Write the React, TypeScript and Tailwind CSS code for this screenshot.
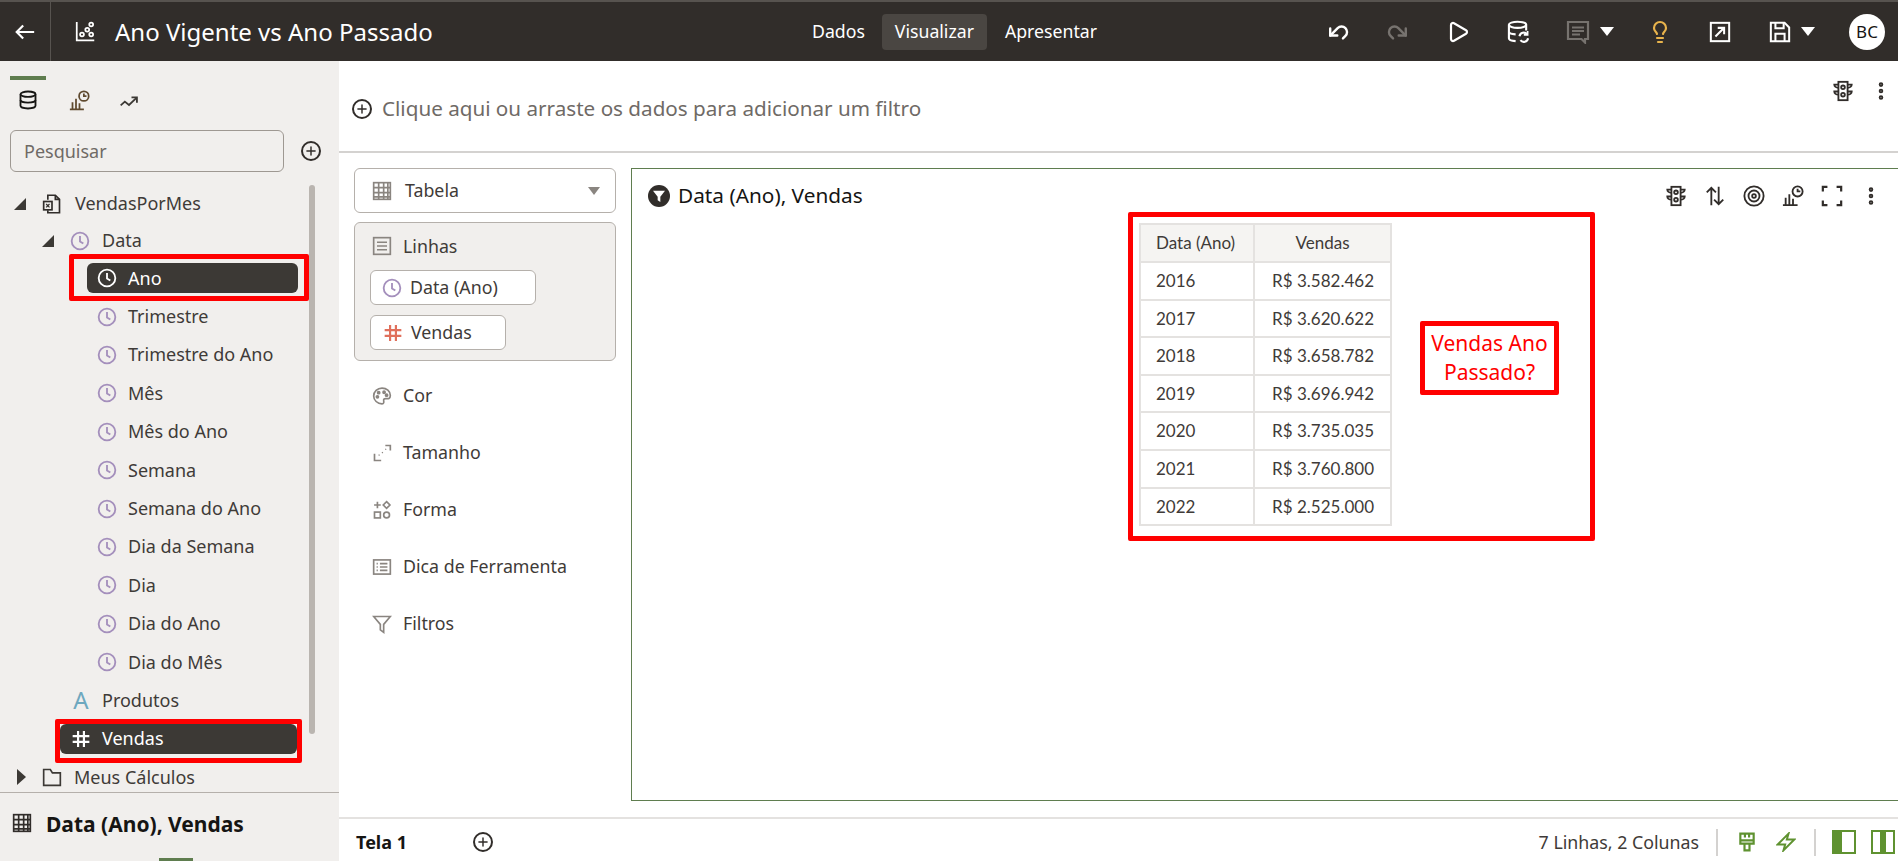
import { Plus, Play, Lightbulb, Undo2, Redo2, Ellipsis } from "lucide-react"

const font = "[font-family:'Noto_Sans',sans-serif]"

type IconProps = { className?: string }

const Svg = ({ className, children, sw = 2 }: IconProps & { children: React.ReactNode; sw?: number }) => (
  <svg viewBox="0 0 24 24" fill="none" stroke="currentColor" strokeWidth={sw} className={className}>
    {children}
  </svg>
)

const ClockIcon = ({ className }: IconProps) => (
  <Svg className={className} sw={2.200}>
    <circle cx="12" cy="12" r="10" />
    <path d="M12 6v6.500l4 2.500" />
  </Svg>
)

const HashIcon = ({ className }: IconProps) => (
  <Svg className={className} sw={2.600}>
    <path d="M8.500 2.500v19M15.500 2.500v19M2 8.500h20M2 15.500h20" />
  </Svg>
)

const GridIcon = ({ className }: IconProps) => (
  <Svg className={className} sw={2}>
    <rect x="2" y="2" width="20" height="20" />
    <path d="M2 8h20M2 14h20M2 19h20M8 2v20M14 2v20M19 2v20" />
  </Svg>
)

const LinesIcon = ({ className }: IconProps) => (
  <Svg className={className} sw={2}>
    <rect x="2" y="2" width="20" height="20" />
    <path d="M6 7.500h12M6 12h12M6 16.500h12" />
  </Svg>
)

const PaletteIcon = ({ className }: IconProps) => (
  <Svg className={className} sw={2}>
    <path d="M12 2.500c5.500 0 10 3.800 10 9 0 4-2.600 3.800-5 3.600-2-.2-3.400.6-3 2.600.3 1.600.4 3.800-2 3.800C6.500 21.500 2 17 2 12 2 6.800 6.500 2.500 12 2.500Z" />
    <circle cx="8" cy="8" r="1.300" fill="currentColor" />
    <circle cx="14.500" cy="7.500" r="1.300" fill="currentColor" />
    <circle cx="17.500" cy="11" r="1.300" fill="currentColor" />
    <circle cx="6.500" cy="13" r="1.300" fill="currentColor" />
  </Svg>
)

const SizeIcon = ({ className }: IconProps) => (
  <Svg className={className} sw={2}>
    <path d="M3 13v8h8" />
    <path d="M16 3h6v6" />
    <path d="M8 15l1 -1M12 12l1 -1M16 8l1 -1" strokeWidth={1.500} />
  </Svg>
)

const ShapeIcon = ({ className }: IconProps) => (
  <Svg className={className} sw={2}>
    <path d="M6.500 2v8M2.500 6h8" />
    <path d="M17.500 2l4 4-4 4-4-4Z" />
    <rect x="3" y="14.500" width="7" height="7" />
    <circle cx="17.500" cy="18" r="3.500" />
  </Svg>
)

const TooltipIcon = ({ className }: IconProps) => (
  <Svg className={className} sw={2}>
    <rect x="2" y="3.500" width="20" height="17" />
    <path d="M9.500 8h9M9.500 12h9M9.500 16h9M5.500 8h1.500M5.500 12h1.500M5.500 16h1.500" />
  </Svg>
)

const FilterIcon = ({ className }: IconProps) => (
  <Svg className={className} sw={2}>
    <path d="M2 3h20l-8 9.500V22l-4-3v-6.500Z" />
  </Svg>
)

const DbIcon = ({ className }: IconProps) => (
  <Svg className={className} sw={2.200}>
    <ellipse cx="12" cy="5" rx="9" ry="3.200" />
    <path d="M3 5v14c0 1.800 4 3.200 9 3.200s9-1.400 9-3.200V5" />
    <path d="M3 12c0 1.800 4 3.200 9 3.200s9-1.400 9-3.200" />
  </Svg>
)

const DbRefreshIcon = ({ className }: IconProps) => (
  <Svg className={className} sw={2.200}>
    <ellipse cx="11" cy="5" rx="9" ry="3.200" />
    <path d="M2 5v14c0 1.500 3 2.800 7 3M20 5v6M2 12c0 1.500 3 2.800 7 3" />
    <path d="M13 17a4.500 4.500 0 0 1 8-2M22 19a4.500 4.500 0 0 1-8 2" />
    <path d="M21.500 11.500v4h-4" strokeWidth={1.800} />
  </Svg>
)

const ChartClockIcon = ({ className }: IconProps) => (
  <Svg className={className} sw={2}>
    <path d="M1 22h16M4 22v-8M8 22V10M12 22v-7" />
    <circle cx="17" cy="7" r="5.500" />
    <path d="M17 4v3h3" />
  </Svg>
)

const TrendIcon = ({ className }: IconProps) => (
  <Svg className={className} sw={2.200}>
    <path d="M2 16l5-4.500 5 4L21 7" />
    <path d="M15 6.500h6.500V13" />
  </Svg>
)

const TrafficIcon = ({ className }: IconProps) => (
  <Svg className={className} sw={2}>
    <rect x="7" y="2" width="10" height="20" />
    <circle cx="12" cy="8" r="2" />
    <circle cx="12" cy="16" r="2" />
    <path d="M7 5H2.500c0 2 2 3.500 4.500 3.500M17 5h4.500c0 2-2 3.500-4.500 3.500M7 12.500H2.500c0 2 2 3.500 4.500 3.500M17 12.500h4.500c0 2-2 3.500-4.500 3.500" />
  </Svg>
)

const SortIcon = ({ className }: IconProps) => (
  <Svg className={className} sw={2}>
    <path d="M8 22V3M3 8l5-5 5 5" />
    <path d="M16 2v19M11 16l5 5 5-5" />
  </Svg>
)

const TargetIcon = ({ className }: IconProps) => (
  <Svg className={className} sw={2}>
    <circle cx="12" cy="12" r="10.500" />
    <circle cx="12" cy="12" r="6" />
    <circle cx="12" cy="12" r="2" />
  </Svg>
)

const ExpandIcon = ({ className }: IconProps) => (
  <Svg className={className} sw={2.400}>
    <path d="M2 7V2h5M17 2h5v5M22 17v5h-5M7 22H2v-5" />
  </Svg>
)

const CommentIcon = ({ className }: IconProps) => (
  <Svg className={className} sw={2.200}>
    <path d="M2 2h20v17h-3v3.500L15.500 19H2Z" />
    <path d="M6 7.500h12M6 11h12M6 14.500h8" />
  </Svg>
)

const ExportIcon = ({ className }: IconProps) => (
  <Svg className={className} sw={2.200}>
    <rect x="2" y="2" width="20" height="20" />
    <path d="M7 17L16 8M9.500 7.500H16.500V14.500" />
  </Svg>
)

const SaveIcon = ({ className }: IconProps) => (
  <Svg className={className} sw={2.200}>
    <path d="M2 2h15l5 5v15H2Z" />
    <path d="M7 2v6h9V2M7 22v-8h10v8" />
  </Svg>
)

const AppIcon = ({ className }: IconProps) => (
  <Svg className={className} sw={2}>
    <path d="M2 1v21h20" />
    <circle cx="8" cy="15.500" r="2.200" />
    <circle cx="14" cy="10" r="2.200" />
    <circle cx="18.500" cy="4" r="2.200" />
    <circle cx="18.500" cy="15.500" r="2.200" />
  </Svg>
)

const FileXIcon = ({ className }: IconProps) => (
  <Svg className={className} sw={2}>
    <path d="M7 7V1.500h9l5 5v16H7v-3" />
    <path d="M16 1.500v5h5" />
    <rect x="2" y="9" width="10" height="10" />
    <path d="M5 12l4 4M9 12l-4 4" strokeWidth={1.400} />
  </Svg>
)

const FolderIcon = ({ className }: IconProps) => (
  <Svg className={className} sw={2}>
    <path d="M2 3h8l2.500 4H22v15H2Z" />
  </Svg>
)

const BrushIcon = ({ className }: IconProps) => (
  <Svg className={className} sw={2.600}>
    <path d="M4 2h16v12H4ZM4 10h16M9.500 2v4.500M14.500 2v4.500M9 14v8h6v-8" />
  </Svg>
)

const BoltIcon = ({ className }: IconProps) => (
  <Svg className={className} sw={2.400}>
    <path d="M15 2L2 15h9l-2 7 13-13h-9Z" />
  </Svg>
)

const Funnel = () => (
  <span className="flex h-[22px] w-[22px] items-center justify-center rounded-full bg-[#312d2a]">
    <svg viewBox="0 0 24 24" className="h-4 w-4" fill="white">
      <path d="M3 4h18l-7 9v8l-4-2.500V13Z" />
    </svg>
  </span>
)

const Row = ({
  pl,
  h = "h-[38.46px]",
  arrow,
  icon,
  label,
}: {
  pl: string
  h?: string
  arrow?: "down" | "right"
  icon: React.ReactNode
  label: string
}) => (
  <div className={`flex shrink-0 items-center whitespace-nowrap text-[18px] text-[#3f3b38] ${h} ${pl}`}>
    {arrow === "down" && (
      <span className="mr-[16px] h-0 w-0 border-b-[12px] border-l-[12px] border-b-[#3c3935] border-l-transparent" />
    )}
    {arrow === "right" && (
      <span className="mr-[16px] h-0 w-0 border-y-[8px] border-l-[9px] border-y-transparent border-l-[#3c3935]" />
    )}
    {icon}
    <span>{label}</span>
  </div>
)

const clockRows = [
  "Trimestre",
  "Trimestre do Ano",
  "Mês",
  "Mês do Ano",
  "Semana",
  "Semana do Ano",
  "Dia da Semana",
  "Dia",
  "Dia do Ano",
  "Dia do Mês",
]

const tableRows = [
  ["2016", "R$ 3.582.462"],
  ["2017", "R$ 3.620.622"],
  ["2018", "R$ 3.658.782"],
  ["2019", "R$ 3.696.942"],
  ["2020", "R$ 3.735.035"],
  ["2021", "R$ 3.760.800"],
  ["2022", "R$ 2.525.000"],
]

const Sidebar = () => (
  <aside className="flex w-[339px] shrink-0 flex-col bg-[#f1efed]">
    <div className="flex h-[60px] shrink-0 items-start pl-[10px] pt-[15px]">
      <div className="flex w-[36px] flex-col items-center">
        <div className="h-1 w-[36px] bg-[#5f7d4f]" />
        <DbIcon className="mt-[10px] h-[20px] w-[20px] text-[#161513]" />
      </div>
      <ChartClockIcon className="ml-[23px] mt-[14px] h-[21px] w-[21px] text-[#5f4a2f]" />
      <TrendIcon className="ml-[29px] mt-[16px] h-[20px] w-[20px] text-[#3c3935]" />
    </div>
    <div className="mt-[9px] flex shrink-0 items-center pl-[10px]">
      <div className="flex h-[42px] w-[274px] items-center rounded-md border border-[#9e9892] px-[13px] text-[18px] text-[#6f6a66]">
        Pesquisar
      </div>
      <span className="ml-[17px] flex h-5 w-5 items-center justify-center rounded-full border-2 border-[#312d2a]">
        <Plus className="h-3.5 w-3.5 text-[#312d2a]" strokeWidth={2.500} />
      </span>
    </div>
    <div className="relative mt-[13px] flex-1 overflow-hidden">
      <div className="absolute left-[309px] top-0 h-[549px] w-[6px] rounded-full bg-[#bab5b0]" />
      <Row
        pl="pl-[14px]"
        h="h-[37px]"
        arrow="down"
        icon={<FileXIcon className="mr-[13px] h-[20px] w-[20px] text-[#312d2a]" />}
        label="VendasPorMes"
      />
      <Row
        pl="pl-[42px]"
        h="h-[37px]"
        arrow="down"
        icon={<ClockIcon className="mr-[12px] h-[20px] w-[20px] text-[#a48fbc]" />}
        label="Data"
      />
      <div className="flex h-[38.4px] shrink-0 items-center pl-[87px]">
        <div className="flex h-[30px] w-[211px] items-center rounded-md bg-[#3c3935] pl-[10px] text-[18px] text-white">
          <ClockIcon className="mr-[11px] h-[20px] w-[20px]" />
          Ano
        </div>
      </div>
      {clockRows.map((r) => (
        <Row
          key={r}
          pl="pl-[97px]"
          h="h-[38.4px]"
          icon={<ClockIcon className="mr-[11px] h-[20px] w-[20px] text-[#a48fbc]" />}
          label={r}
        />
      ))}
      <Row
        pl="pl-[71px]"
        h="h-[38.4px]"
        icon={<span className="mr-[11px] w-[20px] text-center text-[24px] leading-none text-[#6ea8bf]">A</span>}
        label="Produtos"
      />
      <div className="flex h-[38.4px] shrink-0 items-center pl-[60px]">
        <div className="flex h-[30px] w-[237px] items-center rounded-md bg-[#3c3935] pl-[11px] text-[18px] text-white">
          <HashIcon className="mr-[11px] h-[20px] w-[20px]" />
          Vendas
        </div>
      </div>
      <Row
        pl="pl-[17px]"
        h="h-[38.4px]"
        arrow="right"
        icon={<FolderIcon className="mr-[12px] h-[20px] w-[20px] text-[#3c3935]" />}
        label="Meus Cálculos"
      />
    </div>
    <div className="relative flex h-[69px] shrink-0 items-start border-t border-[#b5b0ab] pl-[12px] pt-[20px]">
      <GridIcon className="mr-[14px] h-[20px] w-[20px] text-[#312d2a]" />
      <span className="text-[21px] font-bold leading-[22px] text-[#161513]">Data (Ano), Vendas</span>
      <div className="absolute bottom-0 left-[159px] h-[3px] w-[34px] bg-[#5f7d4f]" />
    </div>
  </aside>
)

const Property = ({ icon, label }: { icon: React.ReactNode; label: string }) => (
  <div className="flex h-[57px] items-center pl-[18px] text-[17.800px] text-[#3f3b38]">
    {icon}
    {label}
  </div>
)

const Palette = () => (
  <div className="w-[262px] shrink-0">
    <div className="flex h-[45px] items-center rounded-md border border-[#b5b0ab] pl-[17px] pr-[15px] text-[17.800px] text-[#3f3b38]">
      <GridIcon className="mr-[13px] h-[20px] w-[20px] text-[#8a8580]" />
      Tabela
      <span className="ml-auto h-0 w-0 border-x-[6px] border-t-[8px] border-x-transparent border-t-[#8a8580]" />
    </div>
    <div className="mt-[9px] h-[139px] rounded-md border border-[#b5b0ab] bg-[#f1efed] pl-[15px] pt-[10px]">
      <div className="flex items-center pl-[2px] text-[17.800px] leading-[26px] text-[#3f3b38]">
        <LinesIcon className="mr-[11px] h-[20px] w-[20px] text-[#8a8580]" />
        Linhas
      </div>
      <div className="mt-[11px] flex h-[35px] w-[166px] items-center rounded-md border border-[#b5b0ab] bg-white pl-[11px] text-[17.800px] text-[#3f3b38]">
        <ClockIcon className="mr-[8px] h-[20px] w-[20px] text-[#a48fbc]" />
        Data (Ano)
      </div>
      <div className="mt-[10px] flex h-[35px] w-[136px] items-center rounded-md border border-[#b5b0ab] bg-white pl-[12px] text-[17.800px] text-[#3f3b38]">
        <HashIcon className="mr-[8px] h-[20px] w-[20px] text-[#e0705c]" />
        Vendas
      </div>
    </div>
    <div className="mt-[6px]">
      <Property icon={<PaletteIcon className="mr-[11px] h-[20px] w-[20px] text-[#8a8580]" />} label="Cor" />
      <Property icon={<SizeIcon className="mr-[11px] h-[20px] w-[20px] text-[#8a8580]" />} label="Tamanho" />
      <Property icon={<ShapeIcon className="mr-[11px] h-[20px] w-[20px] text-[#8a8580]" />} label="Forma" />
      <Property icon={<TooltipIcon className="mr-[11px] h-[20px] w-[20px] text-[#8a8580]" />} label="Dica de Ferramenta" />
      <Property icon={<FilterIcon className="mr-[11px] h-[20px] w-[20px] text-[#8a8580]" />} label="Filtros" />
    </div>
  </div>
)

const DataTable = () => (
  <table className="w-[253px] table-fixed border-collapse border-2 border-[#e4e2e0] [font-family:Lato,sans-serif] text-[17px] text-[#3f3b38]">
    <thead>
      <tr className="h-[38px] bg-[#f5f4f2]">
        <th className="w-[114px] border-2 border-[#e4e2e0] pl-[15px] text-left font-normal">Data (Ano)</th>
        <th className="border-2 border-[#e4e2e0] font-normal">Vendas</th>
      </tr>
    </thead>
    <tbody>
      {tableRows.map(([a, b]) => (
        <tr key={a} className="h-[37.6px]">
          <td className="border-2 border-[#e4e2e0] pl-[15px]">{a}</td>
          <td className="border-2 border-[#e4e2e0] pr-[16px] text-right">{b}</td>
        </tr>
      ))}
    </tbody>
  </table>
)

const Canvas = () => (
  <div className="relative ml-[15px] h-[633px] flex-1 border-y border-l border-[#5f7d4f]">
    <div className="flex h-[54px] items-center pl-[16px] pr-[16px]">
      <Funnel />
      <span className="ml-[8px] text-[20.800px] text-[#161513]">Data (Ano), Vendas</span>
      <div className="ml-auto flex items-center gap-[17px] text-[#312d2a]">
        <TrafficIcon className="h-[22px] w-[22px]" />
        <SortIcon className="h-[22px] w-[22px]" />
        <TargetIcon className="h-[22px] w-[22px]" />
        <ChartClockIcon className="h-[22px] w-[22px]" />
        <ExpandIcon className="h-[22px] w-[22px]" />
        <Ellipsis className="h-[22px] w-[22px] rotate-90" strokeWidth={3} />
      </div>
    </div>
    <div className="ml-[507px] w-[253px]">
      <DataTable />
    </div>
    <div className="absolute left-[496px] top-[43px] h-[329px] w-[467px] rounded-[2px] border-[5px] border-[#ff0000]" />
    <div className="absolute left-[788px] top-[152px] flex h-[74px] w-[139px] items-center justify-center whitespace-nowrap rounded-[2px] border-[5px] border-[#ff0000] text-center text-[21px] leading-[29px] text-[#ff0000]">
      Vendas Ano
      <br />
      Passado?
    </div>
  </div>
)

export default function App() {
  return (
    <div className={`relative flex h-[861px] w-[1898px] flex-col overflow-hidden bg-white ${font}`}>
      <header className="flex h-[61px] shrink-0 items-center border-t-2 border-[#57534f] bg-[#312d2a] text-white">
        <div className="flex h-full w-[51px] items-center justify-center border-r border-[#57534f]">
          <svg viewBox="0 0 24 24" className="h-[22px] w-[22px]" fill="none" stroke="white" strokeWidth={2.400}>
            <path d="M22 12H3M10 5l-7 7 7 7" />
          </svg>
        </div>
        <AppIcon className="ml-[24px] h-[21px] w-[21px]" />
        <span className="ml-[19px] mt-[1px] w-[697px] whitespace-nowrap text-[24px]">Ano Vigente vs Ano Passado</span>
        <span className="text-[17.700px]">Dados</span>
        <span className="ml-[17px] flex h-[36px] w-[105px] items-center justify-center rounded bg-[#4a4642] text-[17.700px]">
          Visualizar
        </span>
        <span className="ml-[18px] text-[17.700px]">Apresentar</span>
        <div className="ml-auto flex items-center pr-[13px]">
          <span className="flex w-[60px] justify-center">
            <Undo2 className="h-[24px] w-[24px] -rotate-45" strokeWidth={2.400} />
          </span>
          <span className="flex w-[60px] justify-center text-[#77736f]">
            <Redo2 className="h-[24px] w-[24px] rotate-45" strokeWidth={2.400} />
          </span>
          <span className="flex w-[60px] justify-center">
            <Play className="h-[24px] w-[24px]" strokeWidth={2.200} />
          </span>
          <span className="flex w-[60px] justify-center">
            <DbRefreshIcon className="h-[23px] w-[23px]" />
          </span>
          <span className="flex w-[88px] items-center pl-[18px] text-[#77736f]">
            <CommentIcon className="h-[24px] w-[24px]" />
            <span className="ml-[10px] h-0 w-0 border-x-[7px] border-t-[9px] border-x-transparent border-t-white" />
          </span>
          <span className="flex w-[48px] justify-center">
            <Lightbulb className="h-[24px] w-[24px] text-[#e9b44c]" strokeWidth={2.200} />
          </span>
          <span className="flex w-[72px] justify-center">
            <ExportIcon className="h-[22px] w-[22px]" />
          </span>
          <span className="flex w-[93px] items-center pl-[13px]">
            <SaveIcon className="h-[22px] w-[22px]" />
            <span className="ml-[10px] h-0 w-0 border-x-[7px] border-t-[9px] border-x-transparent border-t-white" />
          </span>
          <span className="flex h-[36px] w-[36px] items-center justify-center rounded-full bg-white text-[17px] text-[#161513]">
            BC
          </span>
        </div>
      </header>
      <div className="relative flex min-h-0 flex-1">
        <Sidebar />
        <main className="flex min-w-0 flex-1 flex-col">
          <div className="flex h-[92px] shrink-0 items-center border-b-2 border-[#d4d2d0] pl-[13px] pr-[6px] pt-[5px]">
            <span className="flex h-5 w-5 items-center justify-center rounded-full border-2 border-[#312d2a]">
              <Plus className="h-3.5 w-3.5 text-[#312d2a]" strokeWidth={2.500} />
            </span>
            <span className="ml-[10px] text-[20.650px] text-[#6f6a66]">Clique aqui ou arraste os dados para adicionar um filtro</span>
            <div className="ml-auto mt-[14px] flex items-center gap-[16px] self-start text-[#312d2a]">
              <TrafficIcon className="h-[22px] w-[22px]" />
              <Ellipsis className="h-[22px] w-[22px] rotate-90" strokeWidth={3} />
            </div>
          </div>
          <div className="flex flex-1 pl-[15px] pt-[15px]">
            <Palette />
            <Canvas />
          </div>
          <footer className="flex h-[44px] shrink-0 items-center border-t-2 border-[#e4e2e0] pl-[17px] pr-[3px] pt-[4px]">
            <span className="text-[18px] font-bold text-[#161513]">Tela 1</span>
            <span className="ml-[66px] flex h-5 w-5 items-center justify-center rounded-full border-2 border-[#312d2a]">
              <Plus className="h-3.5 w-3.5 text-[#312d2a]" strokeWidth={2.500} />
            </span>
            <span className="ml-auto text-[17.800px] text-[#3f3b38]">7 Linhas, 2 Colunas</span>
            <span className="ml-[17px] h-[27px] w-[2px] bg-[#d4d2d0]" />
            <BrushIcon className="ml-[19px] h-[20px] w-[20px] text-[#5f9230]" />
            <BoltIcon className="ml-[19px] h-[20px] w-[20px] text-[#5f9230]" />
            <span className="ml-[18px] h-[27px] w-[2px] bg-[#d4d2d0]" />
            <span className="ml-[16px] flex h-[24px] w-[24px] border-2 border-[#5f9230]">
              <span className="h-full w-[8px] bg-[#5f9230]" />
            </span>
            <span className="ml-[15px] flex h-[24px] w-[24px] justify-center border-2 border-[#5f9230]">
              <span className="h-full w-[6px] bg-[#5f9230]" />
            </span>
          </footer>
        </main>
        <div className="absolute left-[69px] top-[193px] h-[47px] w-[240px] rounded-[2px] border-[5px] border-[#ff0000]" />
        <div className="absolute left-[55px] top-[658px] h-[44px] w-[247px] rounded-[2px] border-[5px] border-[#ff0000]" />
      </div>
    </div>
  )
}
